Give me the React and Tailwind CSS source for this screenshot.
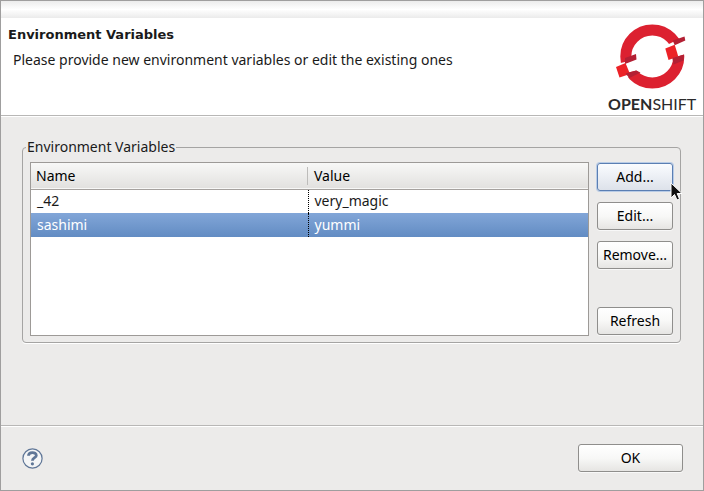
function Logo() {
  return (
    <svg width="90" height="91" viewBox="0 0 90 91" role="img" aria-label="OpenShift">
      <circle cx="44.300" cy="34.500" r="26.500" fill="none" stroke="#dc2130" strokeWidth="11" />
      <path d="M8 42 L17 40 L28 35 L31 48 L18 51 L21.500 55 L10 57Z" fill="#fff" />
      <path d="M57 24 L65 20 L79 14 L80 31.500 L64 36Z" fill="#fff" />
      <path d="M17 36 L28 32 L28.500 37.500 L17 42Z" fill="#b32034" />
      <path d="M8 45 L17.500 41 L22 52 L11.500 55.500Z" fill="#ec2227" />
      <path d="M17.500 51.500 L28 48.500 L32.500 50.500 L21.300 56Z" fill="#b32034" />
      <path d="M64.700 18.500 L76.500 14.500 L77.300 18.500 L66.700 23.300Z" fill="#b32034" />
      <path d="M57.300 26.500 L66.700 22.700 L70.300 34.500 L60.500 38Z" fill="#ec2227" />
      <path d="M64.300 36 L76 32.500 L75.500 38.500 L65.500 42.500Z" fill="#b32034" />
      <text x="0" y="88" fontSize="16" fill="#2b2a2b" className="font-['Lato',sans-serif]">
        <tspan fontWeight="700">OPEN</tspan>
        <tspan fontWeight="400">SHIFT</tspan>
      </text>
    </svg>
  );
}

function PushButton({ children, active = false }) {
  return (
    <button
      type="button"
      className={
        active
          ? "h-7 w-full rounded-[3px] border border-[#5b7fb3] bg-linear-to-b from-[#fafcff] to-[#dde2ea] text-center text-black shadow-[0_0_0_1px_#b9cce6]"
          : "h-7 w-full rounded-[3px] border border-[#8f8e8c] bg-linear-to-b from-white via-[#f8f8f7] to-[#e6e5e3] text-center text-black shadow-[0_1px_0_#f8f8f8]"
      }
    >
      {children}
    </button>
  );
}

const variables = [
  { name: "_42", value: "very_magic" },
  { name: "sashimi", value: "yummi", selected: true },
];

export default function App() {
  return (
    <div className="flex min-h-screen flex-col border border-[#9f9e9e] bg-[#ecebea] font-['Noto_Sans',sans-serif] text-[14px] leading-5 text-[#1a1a1a]">
      <div className="h-[17px] bg-linear-to-b from-[#ececec] via-white to-[#ebebeb]" />
      <header className="flex h-[98px] justify-between border-b border-[#b8b7b6] bg-white pl-[7px] pr-[5px]">
        <div className="pt-[7px]">
          <h1 className="font-['DejaVu_Sans',sans-serif] text-[13px] font-bold">Environment Variables</h1>
          <p className="pl-[5px] pt-[5px]">Please provide new environment variables or edit the existing ones</p>
        </div>
        <div className="pt-1">
          <Logo />
        </div>
      </header>

      <main className="flex-1 border-t border-white pl-[21px] pr-[22px] pt-5">
        <fieldset className="rounded-[4px] border border-[#a5a4a3] px-[7px] pb-1.5 shadow-[0_1px_0_white]">
          <legend className="-ml-1 px-px">Environment Variables</legend>
          <div className="flex gap-2 pt-[5px]">
            <div className="h-[174px] flex-1 border border-[#9d9a97] bg-white">
              <table className="w-full table-fixed border-collapse">
                <thead>
                  <tr className="h-[26px] border-b border-[#a5a19e] bg-linear-to-b from-[#f8f8f7] to-[#e2e1df] text-left text-black">
                    <th className="w-[277px] p-0 pl-[5px] font-normal">Name</th>
                    <th className="p-0 font-normal">
                      <div className="-ml-px flex h-[18px] items-center border-l border-[#bdbcba] pl-[6px]">Value</div>
                    </th>
                  </tr>
                </thead>
                <tbody>
                  {variables.map((v) => (
                    <tr
                      key={v.name}
                      className={v.selected ? "h-6 bg-linear-to-b from-[#82a6d8] to-[#628cc3] text-white" : "h-6"}
                    >
                      <td className="border-r border-dotted border-black p-0 pl-[6px]">{v.name}</td>
                      <td className="p-0 pl-[6px]">{v.value}</td>
                    </tr>
                  ))}
                </tbody>
              </table>
            </div>
            <div className="relative flex w-[76px] flex-col gap-[11px] pt-px">
              <PushButton active>Add...</PushButton>
              <PushButton>Edit...</PushButton>
              <PushButton>Remove...</PushButton>
              <div className="mt-auto pb-px">
                <PushButton>Refresh</PushButton>
              </div>
              <svg className="absolute left-[73px] top-5" width="14" height="20" viewBox="0 0 14 20" aria-hidden="true">
                <path d="M1 1 V16 L4.500 12.500 L7 18 L9.500 17 L7.200 11.500 H12Z" fill="#111" stroke="#fff" strokeWidth="1" />
              </svg>
            </div>
          </div>
        </fieldset>
      </main>

      <footer className="flex h-[65px] items-center justify-between border-t border-[#b8b7b6] pl-[21px] pr-5 shadow-[inset_0_1px_0_white]">
        <button type="button" aria-label="Help" className="size-[21px]">
          <svg width="21" height="21" viewBox="0 0 21 21" aria-hidden="true">
            <circle cx="10.500" cy="10.500" r="9.600" fill="#f4f5f6" stroke="#5f7697" strokeWidth="1.200" />
            <path d="M6.500 7.800 C6.500 3.600 14.300 3.600 14.300 7.400 C14.300 9.800 10.400 9.600 10.400 12.800" fill="none" stroke="#5f7697" strokeWidth="2.800" />
            <circle cx="10.400" cy="15.800" r="1.600" fill="#5f7697" />
          </svg>
        </button>
        <div className="w-[105px]">
          <PushButton>OK</PushButton>
        </div>
      </footer>
    </div>
  );
}
